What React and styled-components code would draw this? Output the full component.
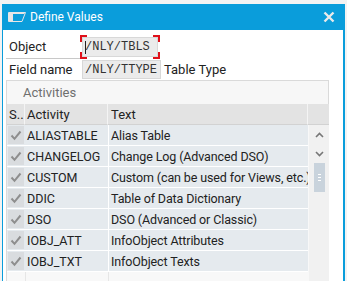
import React from "react";
import styled, { createGlobalStyle } from "styled-components";

const Global = createGlobalStyle`
  html, body { margin: 0; padding: 0; background: #f3f3f3; }
  body { font-family: Roboto, "Liberation Sans", sans-serif; font-size: 12.5px; color: #222; }
  #root { width: 347px; height: 281px; overflow: hidden; }
`;

const Page = styled.div`
  padding: 4px 2px 0 2px;
  height: 281px;
  box-sizing: border-box;
`;

const Dialog = styled.div`
  background: #fff;
  border-left: 1px solid #0a9ddb;
  border-right: 2px solid #0a9ddb;
  height: 100%;
  box-sizing: border-box;
  display: flex;
  flex-direction: column;
  overflow: hidden;
`;

const TitleBar = styled.div`
  flex-shrink: 0;
  height: 26px;
  background: #0a9ddb;
  display: flex;
  align-items: center;
  padding: 0 8px 0 6px;
  color: #fff;
  font-size: 12px;
  gap: 4px;
  margin-left: -1px;
`;

const TitleText = styled.span`
  flex: 1;
`;

const Body = styled.div`
  flex-shrink: 0;
  padding: 5px 0 0 3px;
  display: flex;
  flex-direction: column;
`;

const FormRow = styled.div`
  flex-shrink: 0;
  display: flex;
  align-items: center;
  height: ${(p) => p.h}px;
`;

const Label = styled.div`
  width: 76px;
  height: 100%;
  padding-left: 3px;
  box-sizing: border-box;
  display: flex;
  align-items: center;
  font-size: 13px;
  border-bottom: ${(p) => (p.underline ? "1px solid #c8c8c8" : "none")};
`;

const FocusWrap = styled.div`
  position: relative;
  padding: 2px;
  margin-left: -2px;
`;

const Corner = styled.span`
  position: absolute;
  width: 5px;
  height: 5px;
  border-color: #e0101a;
  border-style: solid;
  border-width: 0;
  ${(p) => (p.t ? "top: 0; border-top-width: 2px;" : "bottom: 0; border-bottom-width: 2px;")}
  ${(p) => (p.l ? "left: 0; border-left-width: 2px;" : "right: 0; border-right-width: 2px;")}
`;

const Input = styled.div`
  width: ${(p) => p.w}px;
  height: ${(p) => p.hh}px;
  box-sizing: border-box;
  background: #ebebeb;
  border: 1px solid #d8d8d8;
  font-family: "Liberation Mono", monospace;
  font-size: 12px;
  color: #333;
  display: flex;
  align-items: center;
  padding-left: 2px;
  position: relative;
`;

const Caret = styled.span`
  display: inline-block;
  width: 1px;
  height: 13px;
  background: #222;
  margin-right: -1px;
`;

const After = styled.span`
  margin-left: 3px;
  font-size: 13px;
`;

const Panel = styled.div`
  flex-shrink: 0;
  margin: 0 14px 0 0;
  border: 1px solid #dadada;
  border-bottom: none;
  display: flex;
  flex-direction: column;
`;

const PanelTitle = styled.div`
  height: 23px;
  background: #f7f7f7;
  color: #6f6f6f;
  padding-left: 16px;
  display: flex;
  align-items: center;
  font-size: 13px;
`;

const Grid = styled.div`
  display: grid;
  grid-template-columns: 18px 83px 200px 21px;
`;

const HeadCell = styled.div`
  height: 20px;
  background: #e3e3e3;
  border-right: ${(p) => (p.last ? "none" : "1px solid #f4f4f4")};
  border-bottom: 1px solid #d2d2d2;
  padding-left: ${(p) => p.pl || 2}px;
  box-sizing: content-box;
  display: flex;
  align-items: center;
  white-space: nowrap;
  overflow: hidden;
  font-size: 13px;
`;

const SelCell = styled.div`
  height: 20px;
  border-bottom: 1px solid #fff;
  background: #e5eaee;
  display: flex;
  align-items: center;
  padding-left: 1px;
`;

const CheckBox = styled.div`
  width: 16px;
  height: 18px;
  background: #d9dcdf;
  display: flex;
  align-items: center;
  justify-content: center;
`;

const Cell = styled.div`
  height: 20px;
  border-bottom: 1px solid #fff;
  background: #e5eaee;
  display: flex;
  align-items: center;
  padding-left: ${(p) => p.pl}px;
  white-space: nowrap;
  overflow: hidden;
  letter-spacing: ${(p) => (p.tight ? "-0.12px" : "0")};
  border-left: ${(p) => (p.sep ? "1px solid #fff" : "none")};
`;

const EmptyCell = styled.div`
  height: 12px;
  background: #f8f8f8;
  border-left: ${(p) => (p.sep ? "1px solid #e6e6e6" : "none")};
`;

const ScrollCol = styled.div`
  grid-column: 4;
  grid-row: 2 / span 8;
  background: #f1f1f1;
  border-left: 1px solid #f8f8f8;
  display: flex;
  flex-direction: column;
  align-items: center;
`;

const ArrowBtn = styled.div`
  height: 19px;
  width: 100%;
  display: flex;
  align-items: center;
  justify-content: center;
`;

const Thumb = styled.div`
  width: 11px;
  height: 29px;
  background: #c9d3dc;
  display: flex;
  flex-direction: column;
  align-items: center;
  justify-content: center;
  gap: 2px;
`;

const Grip = styled.span`
  width: 3px;
  height: 1px;
  background: #fff;
`;

const rows = [
  ["ALIASTABLE", "Alias Table"],
  ["CHANGELOG", "Change Log (Advanced DSO)"],
  ["CUSTOM", "Custom (can be used for Views, etc.)"],
  ["DDIC", "Table of Data Dictionary"],
  ["DSO", "DSO (Advanced or Classic)"],
  ["IOBJ_ATT", "InfoObject Attributes"],
  ["IOBJ_TXT", "InfoObject Texts"],
];

const Check = () => (
  <svg width="12" height="11" viewBox="0 0 12 11">
    <path d="M1.5 5.5 L4.5 8.8 L10.5 1.5" fill="none" stroke="#8e8e8e" strokeWidth="2" />
  </svg>
);

const DialogIcon = () => (
  <svg width="18" height="10" viewBox="0 0 18 10">
    <path d="M0.5 0.5 H17.5 L14 9.5 H0.5 Z" fill="none" stroke="#e6e6e6" strokeWidth="1" />
    <rect x="1" y="1" width="4" height="8" fill="#e6e6e6" />
    <path d="M5 1 H16.5 L16.3 2 H5 Z" fill="#e6e6e6" />
  </svg>
);

const CloseIcon = () => (
  <svg width="12" height="12" viewBox="0 0 12 12">
    <path d="M1.5 1.5 L10.5 10.5 M10.5 1.5 L1.5 10.5" stroke="#eaeaea" strokeWidth="2.4" />
  </svg>
);

const Up = () => (
  <svg width="9" height="6" viewBox="0 0 9 6">
    <path d="M1 5 L4.5 1.5 L8 5" fill="none" stroke="#777" strokeWidth="1.6" />
  </svg>
);
const Down = () => (
  <svg width="9" height="6" viewBox="0 0 9 6">
    <path d="M1 1 L4.5 4.5 L8 1" fill="none" stroke="#777" strokeWidth="1.6" />
  </svg>
);

export default function App() {
  return (
    <>
      <Global />
      <Page>
        <Dialog>
          <TitleBar>
            <DialogIcon />
            <TitleText>Define Values</TitleText>
            <CloseIcon />
          </TitleBar>
          <Body>
            <FormRow h={24}>
              <Label underline>Object</Label>
              <FocusWrap>
                <Corner t l />
                <Corner t />
                <Corner l />
                <Corner />
                <Input w={76} hh={20}>
                  <Caret />/NLY/TBLS
                </Input>
              </FocusWrap>
            </FormRow>
            <FormRow h={21}>
              <Label>Field name</Label>
              <Input w={79} hh={19}>/NLY/TTYPE</Input>
              <After>Table Type</After>
            </FormRow>
            <Panel>
              <PanelTitle>Activities</PanelTitle>
              <Grid>
                <HeadCell>S..</HeadCell>
                <HeadCell>Activity</HeadCell>
                <HeadCell pl={3}>Text</HeadCell>
                <HeadCell last />
                {rows.map(([a, t], i) => (
                  <React.Fragment key={a}>
                    <SelCell style={{ gridRow: i + 2, gridColumn: 1 }}>
                      <CheckBox>
                        <Check />
                      </CheckBox>
                    </SelCell>
                    <Cell pl={2} style={{ gridRow: i + 2, gridColumn: 2 }}>{a}</Cell>
                    <Cell pl={2} sep tight style={{ gridRow: i + 2, gridColumn: 3 }}>{t}</Cell>
                  </React.Fragment>
                ))}
                <ScrollCol>
                  <ArrowBtn><Up /></ArrowBtn>
                  <ArrowBtn><Down /></ArrowBtn>
                  <Thumb>
                    <Grip />
                    <Grip />
                    <Grip />
                  </Thumb>
                </ScrollCol>
                <EmptyCell style={{ gridRow: 9, gridColumn: 1 }} />
                <EmptyCell sep style={{ gridRow: 9, gridColumn: 2 }} />
                <EmptyCell sep style={{ gridRow: 9, gridColumn: 3 }} />
              </Grid>
            </Panel>
          </Body>
        </Dialog>
      </Page>
    </>
  );
}
